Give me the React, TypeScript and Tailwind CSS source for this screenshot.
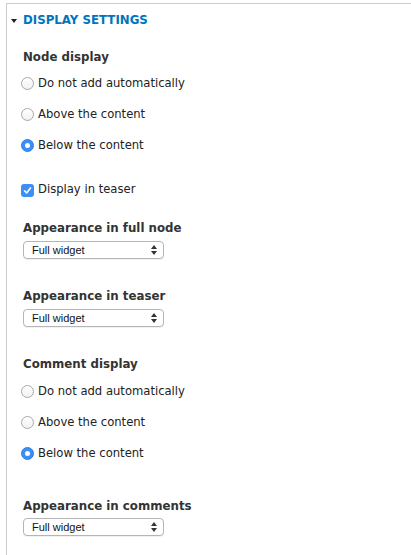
import React, { useState } from 'react';

const font = { fontFamily: '"DejaVu Sans", Verdana, sans-serif' };

const Radio: React.FC<{ checked: boolean; label: string; onClick: () => void }> = ({ checked, label, onClick }) => (
  <div className="h-[31px] flex items-center gap-1 cursor-pointer" onClick={onClick}>
    {checked ? (
      <span className="w-[13px] h-[13px] rounded-full bg-[#3b8ff6] border border-[#2f7ee6] flex items-center justify-center">
        <span className="w-[5px] h-[5px] rounded-full bg-white" />
      </span>
    ) : (
      <span className="w-[13px] h-[13px] rounded-full border border-[#a9a9a9] bg-gradient-to-b from-white to-[#f1f1f1]" />
    )}
    <span className="text-[11.6px] text-[#222]">{label}</span>
  </div>
);

const Select: React.FC<{ className?: string }> = ({ className }) => (
  <div className={`w-[141px] h-[18px] rounded-[4px] border border-[#b5b5b5] bg-white flex items-center justify-between pl-[8px] pr-[6px] shadow-[0_1px_0_rgba(0,0,0,0.05)] ${className ?? ''}`}>
    <span className="text-[11px] text-[#111] leading-none" style={{ fontFamily: '"Liberation Sans", Arial, sans-serif' }}>Full widget</span>
    <svg width="6" height="10" viewBox="0 0 6 10">
      <path d="M3 0 L6 4 L0 4 Z" fill="#333" />
      <path d="M3 10 L6 6 L0 6 Z" fill="#333" />
    </svg>
  </div>
);

const Label: React.FC<{ children: React.ReactNode; className?: string }> = ({ children, className }) => (
  <div className={`h-5 flex items-center ml-[2px] text-[11.8px] font-bold text-[#333] ${className ?? ''}`}>{children}</div>
);

const options = ['Do not add automatically', 'Above the content', 'Below the content'];

export default function App() {
  const [nodeDisplay, setNodeDisplay] = useState(2);
  const [commentDisplay, setCommentDisplay] = useState(2);
  const [teaser, setTeaser] = useState(true);

  return (
    <div className="w-[411px] h-[555px] bg-white overflow-hidden" style={font}>
      <div className="mt-[3px] ml-[6px] border-t border-l border-[#cccccc] h-[560px]">
        <div className="h-[33px] flex items-center pl-[4px] gap-[6px]">
          <svg width="6" height="4" viewBox="0 0 6 4">
            <path d="M0 0 L6 0 L3 4 Z" fill="#222" />
          </svg>
          <span className="text-[11.8px] font-bold uppercase text-[#0074bd]">Display settings</span>
        </div>

        <div className="pl-[14px]">
          <Label className="mt-[11px]">Node display</Label>
          {options.map((o, i) => (
            <Radio key={o} label={o} checked={nodeDisplay === i} onClick={() => setNodeDisplay(i)} />
          ))}

          <div className="h-5 mt-[19px] flex items-center gap-1 cursor-pointer" onClick={() => setTeaser(!teaser)}>
            <span className={`w-[13px] h-[13px] rounded-[3px] flex items-center justify-center ${teaser ? 'bg-[#3b8ff6]' : 'border border-[#a9a9a9]'}`}>
              {teaser && (
                <svg width="9" height="9" viewBox="0 0 9 9">
                  <path d="M1.5 4.8 L3.6 7 L7.5 2" stroke="white" strokeWidth="1.6" fill="none" strokeLinecap="round" strokeLinejoin="round" />
                </svg>
              )}
            </span>
            <span className="text-[11.6px] text-[#222]">Display in teaser</span>
          </div>

          <Label className="mt-[19px]">Appearance in full node</Label>
          <Select className="mt-[2px] ml-[2px]" />

          <Label className="mt-[28px]">Appearance in teaser</Label>
          <Select className="mt-[2px] ml-[2px]" />

          <Label className="mt-[28px]">Comment display</Label>
          <div className="mt-[1px]">
            {options.map((o, i) => (
              <Radio key={o} label={o} checked={commentDisplay === i} onClick={() => setCommentDisplay(i)} />
            ))}
          </div>

          <Label className="mt-[28px]">Appearance in comments</Label>
          <Select className="mt-[1px] ml-[2px]" />
        </div>
      </div>
    </div>
  );
}
